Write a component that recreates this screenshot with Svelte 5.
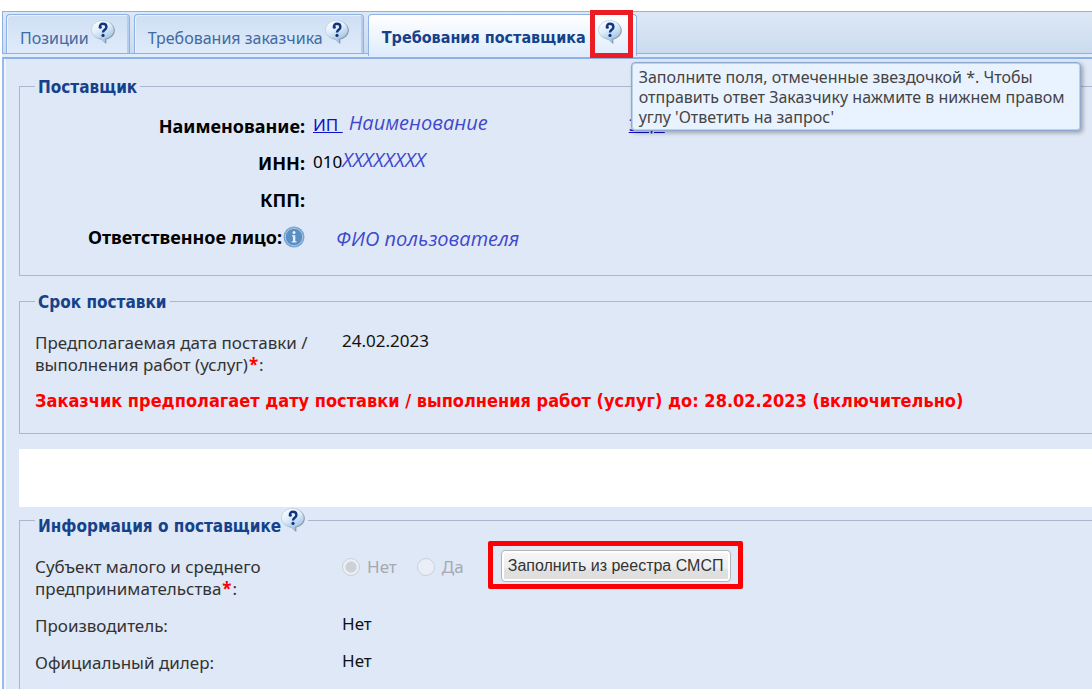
<script>
  // вкладки запроса
  const tabs = [
    { id: 'positions', title: 'Позиции' },
    { id: 'customer', title: 'Требования заказчика' },
    { id: 'supplier', title: 'Требования поставщика' }
  ];

  let active = $state('supplier');
  let smallBusiness = $state('no');

  // простые поля в блоке информации о поставщике
  const facts = [
    { label: 'Производитель', value: 'Нет' },
    { label: 'Официальный дилер', value: 'Нет' }
  ];
</script>

{#snippet helpIcon()}
  <svg class="help-icon" viewBox="0 0 24 24" aria-hidden="true">
    <defs>
      <linearGradient id="bubble" x1="0" y1="0" x2="0.5" y2="1">
        <stop offset="0" stop-color="#ffffff" />
        <stop offset="0.5" stop-color="#e0eefa" />
        <stop offset="1" stop-color="#9cc4e6" />
      </linearGradient>
    </defs>
    <path
      d="M12.600 1C6.200 1 1 5.200 1 10.600c0 4.700 4.200 8.500 9.600 9.100 1 1.200 2.400 2.700 4.600 4.200 .3-1.500 .3-3 .1-4.400 4.900-1.100 8.500-4.700 8.500-9C23.800 5.200 18.900 1 12.600 1z"
      fill="#75808c" opacity="0.8"
    />
    <path
      d="M11.700 .4C5.500 .4 .500 4.600 .500 9.900c0 4.600 4 8.300 9.400 8.900 1.100 1.300 2.300 2.500 3.900 3.600 .1-1.300 .1-2.500-.1-3.800 5.100-.9 8.900-4.400 8.900-8.700C22.600 4.600 17.900 .4 11.700 .4z"
      fill="url(#bubble)" stroke="#b4c8dc" stroke-width="0.6"
    />
    <path
      d="M9 7.400c-.3-2.200 .9-3.600 2.900-3.600 2.100 0 3.500 1.200 3.500 3.100 0 2.800-3.300 2.900-3.400 5.600"
      fill="none" stroke="#12337f" stroke-width="2.400"
    />
    <circle cx="9.300" cy="7.200" r="1.500" fill="#12337f" />
    <circle cx="12" cy="15.400" r="1.600" fill="#12337f" />
  </svg>
{/snippet}

<main class="page">
  <nav class="tabs">
    {#each tabs as tab}
      <div class="tab" class:active={active === tab.id}>
        <button class="tab-title" onclick={() => (active = tab.id)}>{tab.title}</button>
        {#if tab.id === 'supplier'}
          <span class="help marked">
            {@render helpIcon()}
            <span class="tooltip" role="tooltip">
              Заполните поля, отмеченные звездочкой *. Чтобы отправить ответ Заказчику нажмите в нижнем правом углу 'Ответить на запрос'
            </span>
          </span>
        {:else}
          <span class="help">{@render helpIcon()}</span>
        {/if}
      </div>
    {/each}
  </nav>

  <div class="content">
    <fieldset class="supplier">
      <legend>Поставщик</legend>
      <dl>
        <dt>Наименование:</dt>
        <dd>
          <a href="#company">ИП&nbsp;</a>
          <em class="name">Наименование</em>
          <a href="#card">ЭЦП</a>
        </dd>
        <dt>ИНН:</dt>
        <dd>010<em>XXXXXXXX</em></dd>
        <dt>КПП:</dt>
        <dd></dd>
        <dt>
          Ответственное лицо:
          <svg class="info-icon" viewBox="0 0 22 22" aria-hidden="true">
            <circle cx="11" cy="11" r="10.500" fill="#7ba3cd" />
            <circle cx="11" cy="11" r="8.700" fill="#5b8fc4" stroke="#a9c8e6" stroke-width="1" />
            <circle cx="11" cy="6.600" r="1.500" fill="#e4effa" />
            <path d="M9 9.200h3.300v6h1.200v1.300H8.700v-1.300H10v-4.700H9z" fill="#e4effa" />
          </svg>
        </dt>
        <dd><em class="person">ФИО пользователя</em></dd>
      </dl>
    </fieldset>

    <fieldset class="delivery">
      <legend>Срок поставки</legend>
      <div class="row">
        <span class="label">Предполагаемая дата поставки / выполнения работ (услуг)<b>*</b>:</span>
        <span class="value">24.02.2023</span>
      </div>
      <p class="warning">
        Заказчик предполагает дату поставки / выполнения работ (услуг) до: 28.02.2023 (включительно)
      </p>
    </fieldset>

    <div class="blank"></div>

    <fieldset class="info">
      <legend>Информация о поставщике {@render helpIcon()}</legend>
      <div class="row">
        <span class="label" id="smb">Субъект малого и среднего предпринимательства<b>*</b>:</span>
        <div class="choice" role="radiogroup" aria-labelledby="smb">
          <label><input type="radio" name="smb" value="no" bind:group={smallBusiness} disabled />Нет</label>
          <label><input type="radio" name="smb" value="yes" bind:group={smallBusiness} disabled />Да</label>
          <div class="frame">
            <button class="fill">Заполнить из реестра СМСП</button>
          </div>
        </div>
      </div>
      {#each facts as fact}
        <div class="row">
          <span class="label">{fact.label}:</span>
          <span class="value">{fact.value}</span>
        </div>
      {/each}
    </fieldset>
  </div>
</main>

<style>
  :global(body) {
    margin: 0;
    background: #fff;
  }

  .page {
    box-sizing: border-box;
    display: flex;
    flex-direction: column;
    min-height: 100vh;
    padding: 11px 0 0 2px;
    overflow: hidden;
    font-family: "Noto Sans", Tahoma, sans-serif;
    font-size: 17px;
    line-height: 22px;
    color: #222;
  }

  /* полоса вкладок */
  .tabs {
    box-sizing: border-box;
    display: flex;
    gap: 4px;
    height: 43px;
    padding: 2px 0 0 3px;
    border: 1px solid #8db2e3;
    border-right: none;
    background: linear-gradient(#dde8f5, #cbdbef);
  }

  .tab {
    box-sizing: border-box;
    display: flex;
    gap: 2px;
    padding: 5px 14px 0 13px;
    border: 1px solid #8db2e3;
    border-bottom: none;
    border-radius: 4px 4px 0 0;
    background: linear-gradient(#cfdff3, #dfebfb);
    box-shadow: inset 1px 1px 0 #eaf2fc, inset -2px 0 0 #b4cdee;
  }

  .tab.active {
    z-index: 1;
    gap: 12px;
    margin-bottom: -3px;
    background: linear-gradient(#fff, #deecfd);
    box-shadow: none;
  }

  .tab-title {
    height: 22px;
    margin: 7px 0 0;
    padding: 0;
    border: none;
    background: none;
    font: inherit;
    font-size: 16px;
    color: #416aa3;
    white-space: nowrap;
    cursor: pointer;
  }

  .active .tab-title,
  legend,
  .warning {
    font-family: "DejaVu Sans Condensed", "DejaVu Sans", sans-serif;
    font-stretch: condensed;
    font-weight: bold;
    color: #15428b;
  }

  .help {
    position: relative;
    height: 24px;
  }

  .help-icon {
    display: block;
    width: 24px;
    height: 24px;
  }

  .marked::after {
    content: '';
    position: absolute;
    inset: -10px -11px -14px -8px;
    border: 5px solid #ec1c24;
  }

  .tooltip {
    position: absolute;
    z-index: 2;
    top: 42px;
    left: 33px;
    box-sizing: border-box;
    width: 450px;
    padding: 4px 7px 3px;
    border: 1px solid #8eaace;
    border-radius: 4px;
    background: #e9f2ff;
    box-shadow: inset 0 0 0 1px #b9d0ee, 2px 2px 4px rgba(0, 0, 0, 0.3);
    font-size: 16px;
    line-height: 20px;
    color: #444;
  }

  /* содержимое вкладки */
  .content {
    display: flex;
    flex: 1;
    flex-direction: column;
    margin-top: 3px;
    padding: 16px 0 0 15px;
    border-top: 2px solid #8db2e3;
    border-left: 2px solid #99bbe8;
    background: #dfe8f6;
    box-shadow: 0 -3px 0 #deecfd, inset 2px 0 0 #eef4fc;
  }

  fieldset {
    margin: 0;
    padding: 0 15px;
    border: 1px solid #a9b8ce;
    border-right: none;
  }

  legend {
    padding: 2px 3px 0;
    font-size: 17px;
    line-height: 20px;
  }

  dl {
    display: grid;
    grid-template-columns: 270px 1fr;
    grid-auto-rows: 37px;
    column-gap: 8px;
    align-items: center;
    margin: 10px 0 20px;
    color: #000;
  }

  dt {
    display: flex;
    justify-content: flex-end;
    align-items: center;
    gap: 1px;
    font-size: 18px;
    font-weight: bold;
  }

  dd {
    display: flex;
    align-items: center;
    margin: 0;
    padding-bottom: 2px;
  }

  a {
    color: #1010cc;
  }

  em {
    padding-bottom: 4px;
    font-family: "Open Sans", sans-serif;
    font-size: 20px;
    color: #3f48cc;
  }

  .name {
    width: 280px;
    margin-left: 6px;
  }

  .person {
    margin-left: 23px;
    padding: 6px 0 0;
  }

  .info-icon {
    width: 22px;
    height: 22px;
  }

  .delivery {
    margin-top: 14px;
  }

  .row {
    display: grid;
    grid-template-columns: 292px 1fr;
    column-gap: 15px;
    margin-bottom: 15px;
    color: #111;
  }

  .label {
    color: #333;
  }

  .value {
    line-height: 18px;
  }

  b {
    padding: 0 1px;
    color: #f00;
  }

  .delivery .row {
    margin: 20px 0 14px;
  }

  .warning {
    margin: 0 0 21px;
    font-size: 18px;
    color: #f00;
  }

  .blank {
    height: 58px;
    margin-top: 15px;
    background: #fff;
  }

  /* информация о поставщике */
  .info {
    flex: 1;
    margin-top: 1px;
    padding-bottom: 12px;
    border-bottom: none;
  }

  .info legend {
    display: flex;
    align-items: flex-end;
    height: 24px;
    padding-top: 0;
    line-height: 12px;
  }

  .info .row {
    align-items: start;
  }

  .info legend + .row {
    margin-top: 24px;
  }

  .choice {
    display: flex;
    gap: 20px;
    height: 22px;
  }

  .choice label {
    display: flex;
    align-items: center;
    gap: 7px;
    color: #a6a9af;
  }

  input {
    appearance: none;
    box-sizing: border-box;
    width: 18px;
    height: 18px;
    margin: 0;
    border: 1px solid #ccd0d6;
    border-radius: 50%;
    background: #e9eef7;
  }

  input:checked {
    border-color: #ccd0d6;
    background: radial-gradient(circle, #cdd1d6 5px, #e9eef7 6px);
  }

  .frame {
    align-self: center;
    margin: 0 0 4px 4px;
    padding: 4px 7px 2px 8px;
    border: 5px solid #fc0006;
    border-radius: 2px;
  }

  .fill {
    display: block;
    min-width: 230px;
    height: 32px;
    padding: 0 3px;
    border: 1px solid #b4b4b4;
    border-radius: 4px;
    background: linear-gradient(#f6f6f6, #eee 55%, #e0e0e0 65%, #dedede);
    box-shadow: inset 0 0 0 2px #fff;
    font-family: "Liberation Sans", Arial, sans-serif;
    font-size: 16px;
    white-space: nowrap;
    color: #333;
  }
</style>
